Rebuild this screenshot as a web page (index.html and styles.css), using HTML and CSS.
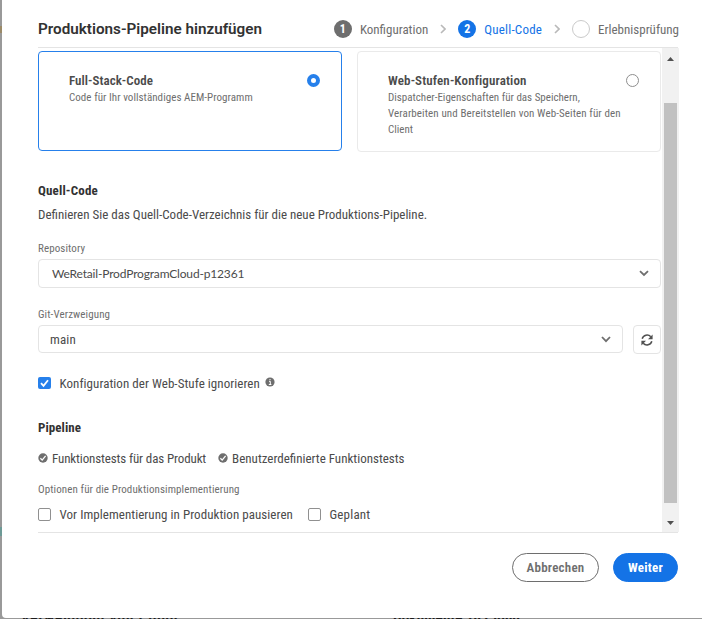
FILE: index.html
```html
<!DOCTYPE html>
<html lang="de">
<head>
<meta charset="utf-8">
<title>Produktions-Pipeline hinzufügen</title>
<link rel="stylesheet" href="styles.css">
</head>
<body>
<div class="backdrop"><i class="tan"></i><i class="teal"></i><b class="under-left">Verwendung von Cloud</b><b class="under-right">Dokumente zu Cloud</b></div>
<main class="dialog">
  <header class="header">
    <h1>Produktions-Pipeline hinzufügen</h1>
    <ol class="steps">
      <li class="step"><span class="num">1</span><span class="name">Konfiguration</span></li>
      <li class="sep"><svg width="6" height="10" viewBox="0 0 6 10"><path d="M1 1l4 4-4 4"/></svg></li>
      <li class="step active"><span class="num">2</span><span class="name">Quell-Code</span></li>
      <li class="sep"><svg width="6" height="10" viewBox="0 0 6 10"><path d="M1 1l4 4-4 4"/></svg></li>
      <li class="step todo"><span class="num"></span><span class="name">Erlebnisprüfung</span></li>
    </ol>
  </header>
  <div class="viewport">
    <div class="content">
      <div class="cards">
        <section class="card selected">
          <div class="card-text"><h3>Full-Stack-Code</h3><p>Code für Ihr vollständiges AEM-Programm</p></div>
          <span class="radio"></span>
        </section>
        <section class="card">
          <div class="card-text"><h3 class="wide">Web-Stufen-Konfiguration</h3><p>Dispatcher-Eigenschaften für das Speichern,<br><span class="second-line">Verarbeiten und Bereitstellen von Web-Seiten für den</span><br>Client</p></div>
          <span class="radio"></span>
        </section>
      </div>
      <h2 class="source-title">Quell-Code</h2>
      <p class="intro">Definieren Sie das Quell-Code-Verzeichnis für die neue Produktions-Pipeline.</p>
      <div class="label">Repository</div>
      <div class="select repo"><span>WeRetail-ProdProgramCloud-p12361</span><svg class="chev" width="10" height="7" viewBox="0 0 10 7"><path d="M1 1.2l4 3.8 4-3.8"/></svg></div>
      <div class="label git-label">Git-Verzweigung</div>
      <div class="branch">
        <div class="select"><span class="value">main</span><svg class="chev" width="10" height="7" viewBox="0 0 10 7"><path d="M1 1l4 4.2L9 1"/></svg></div>
        <div class="refresh"><svg width="14" height="14" viewBox="0 0 14 14"><path class="arc" d="M2.2 5.8A5 5 0 0 1 10.8 3.8M11.8 8.2A5 5 0 0 1 3.2 10.2"/><path class="tip" d="M12.6 1.6v4.6H8zM1.4 12.4V7.8H6z"/></svg></div>
      </div>
      <div class="check-row ignore">
        <span class="box checked"><svg width="13" height="12" viewBox="0 0 13 12"><path d="M3 6.2l2.5 2.6L10 3.2"/></svg></span><span>Konfiguration der Web-Stufe ignorieren</span>
        <svg class="info" width="10" height="10" viewBox="0 0 10 10"><circle cx="5" cy="5" r="4.6"/><path d="M4 4.3h1.3v3M3.8 7.5h2.6M5 2v1.2"/></svg>
      </div>
      <h2 class="pipe-title">Pipeline</h2>
      <div class="tests">
        <span class="test product"><svg width="10" height="10" viewBox="0 0 10 10"><circle cx="5" cy="5" r="4.7"/><path d="M2.4 5.2l1.8 1.9 3.4-4.2"/></svg>Funktionstests für das Produkt</span>
        <span class="test"><svg width="10" height="10" viewBox="0 0 10 10"><circle cx="5" cy="5" r="4.7"/><path d="M2.4 5.2l1.8 1.9 3.4-4.2"/></svg>Benutzerdefinierte Funktionstests</span>
      </div>
      <div class="label options-label">Optionen für die Produktionsimplementierung</div>
      <div class="check-row options"><span class="box"></span><span>Vor Implementierung in Produktion pausieren</span><span class="box second"></span><span class="planned">Geplant</span></div>
    </div>
    <div class="scrollbar">
      <svg width="7" height="4" viewBox="0 0 7 4"><path d="M0 4L3.5 0 7 4z"/></svg>
      <div class="thumb"></div>
      <svg width="7" height="4" viewBox="0 0 7 4"><path d="M0 0h7L3.5 4z"/></svg>
    </div>
  </div>
  <footer class="footer"><button class="btn cancel">Abbrechen</button><button class="btn next">Weiter</button></footer>
</main>
</body>
</html>
```

FILE: styles.css
```css
* { box-sizing: border-box; }
body {
  margin: 0;
  height: 619px;
  overflow: hidden;
  padding-left: 2px;
  background: #999;
  color: #4b4b4b;
  font: 400 13px/20px Roboto, sans-serif;
  font-stretch: 85%;
}
h1, h2, h3, p, ol { margin: 0; padding: 0; }
svg { display: block; flex: none; }
/* Page behind the dialog, visible only at its left and bottom edges */
.backdrop { position: absolute; inset: 0; overflow: hidden; height: 619px; color: #1c1c1c; }
.backdrop i, .backdrop b { position: absolute; }
.tan { left: 0; top: 26px; width: 2px; height: 7px; background: #9b8a68; }
.teal { left: 0; top: 527px; width: 2px; height: 9px; background: #6d9a96; }
.under-left, .under-right { top: 608px; font-size: 15px; letter-spacing: 1px; white-space: nowrap; }
.under-left { left: 21px; }
.under-right { left: 393px; letter-spacing: .2px; }
.dialog {
  position: relative;
  height: 618px;
  padding: 0 24px 0 36px;
  background: #fff;
  border-bottom-left-radius: 4px;
  white-space: nowrap;
}
.header {
  height: 48px;
  padding-top: 10px;
  display: flex;
  justify-content: space-between;
  align-items: center;
  border-bottom: 1px solid #e4e4e4;
}
h1 { font-size: 15.25px; font-weight: 600; font-stretch: 100%; line-height: 20px; color: #323232; }
.steps { display: flex; align-items: center; list-style: none; color: #6e6e6e; margin-right: -1px; }
.step { display: flex; align-items: center; gap: 8px; }
.name { padding-top: 2px; }
.num {
  width: 18px; height: 18px;
  border-radius: 50%;
  background: #6e6e6e;
  color: #fff;
  font-size: 12px; font-weight: 700; line-height: 18px;
  text-align: center;
}
.active { color: #1473e6; letter-spacing: .2px; }
.active .num { background: #1473e6; }
.todo .num { background: none; border: 1px solid #cacaca; }
.sep { width: 30px; padding-left: 12px; }
.sep svg { fill: none; stroke: #b9b9b9; stroke-width: 1.6; }
.viewport { display: flex; height: 485px; border-bottom: 1px solid #e4e4e4; }
.content { width: 623px; }
.cards { display: flex; gap: 15px; padding-top: 3px; }
.card {
  display: flex;
  justify-content: space-between;
  width: 304px; height: 101px;
  padding: 20px 21px 0 30px;
  border: 1px solid #eaeaea;
  border-radius: 4px;
}
.card.selected { height: 100px; border-color: #2680eb; }
.card h3 { font-size: 13px; font-weight: 600; line-height: 18px; letter-spacing: .05px; }
.card h3.wide { letter-spacing: .14px; }
.card p { font-size: 11px; line-height: 16px; color: #6e6e6e; }
.card.selected p { letter-spacing: .05px; }
.second-line { letter-spacing: .1px; }
.card-text { width: 234px; }
.radio { flex: none; width: 13px; height: 13px; margin-top: 2px; border: 1px solid #8e8e8e; border-radius: 50%; }
.selected .radio { border: 4px solid #2680eb; }
h2 { font-size: 13px; font-weight: 700; line-height: 20px; color: #323232; letter-spacing: .17px; }
.source-title { margin-top: 29px; }
.intro { margin-top: 4px; }
.label { font-size: 11px; line-height: 16px; color: #6e6e6e; letter-spacing: .1px; margin-top: 16px; }
.select {
  display: flex;
  align-items: center;
  justify-content: space-between;
  height: 28px;
  padding: 0 11px;
  border: 1px solid #e4e4e4;
  border-radius: 4px;
}
.value { padding-top: 2px; }
.repo { height: 29px; margin-top: 2px; padding: 0 11px 0 13px; font: 12px/20px Lato, sans-serif; letter-spacing: -.17px; }
.chev { fill: none; stroke: #6e6e6e; stroke-width: 1.8; }
.git-label { margin-top: 19px; }
.branch { display: flex; gap: 10px; margin-top: 2px; height: 29px; letter-spacing: .17px; }
.branch .select { width: 585px; }
.refresh { width: 28px; height: 29px; padding: 7px 6px; border: 1px solid #e4e4e4; border-radius: 4px; }
.arc { fill: none; stroke: #505050; stroke-width: 1.5; }
.tip { fill: #505050; }
.check-row { display: flex; align-items: center; letter-spacing: .05px; }
.box { flex: none; width: 13px; height: 13px; margin: 0 8.5px 2px 0; border: 1px solid #909090; border-radius: 2px; }
.box.checked { height: 12px; border: 0; background: #2680eb; }
.checked svg { fill: none; stroke: #fff; stroke-width: 1.8; }
.ignore { margin-top: 20px; }
.info { margin: -4px 0 0 5px; }
.info circle, .test circle { fill: #6e6e6e; }
.info path { fill: none; stroke: #fff; stroke-width: 1; }
.pipe-title { margin-top: 24px; letter-spacing: .06px; }
.tests { display: flex; gap: 12px; margin-top: 11px; }
.test { display: flex; align-items: center; gap: 4px; }
.product { letter-spacing: -.12px; }
.test svg { margin-top: -3px; }
.test path { fill: none; stroke: #fff; stroke-width: 1.3; }
.options-label { margin-top: 13px; }
.options { margin-top: 7px; }
.box.second { margin-left: 15px; }
.planned { letter-spacing: .2px; }
.scrollbar {
  width: 17px;
  padding: 9px 2px 7px;
  background: #f1f1f1;
  display: flex;
  flex-direction: column;
  align-items: center;
  justify-content: space-between;
  margin-left: 1px;
}
.scrollbar svg { fill: #505050; }
.thumb { width: 13px; height: 400px; margin-top: 24px; background: #c1c1c1; }
.footer { display: flex; justify-content: flex-end; gap: 14px; padding-top: 20px; }
.btn {
  height: 29px;
  padding: 0;
  border: 1px solid #6e6e6e;
  border-radius: 15px;
  background: #fff;
  color: #6e6e6e;
  font: 600 13px/20px Roboto, sans-serif;
  font-stretch: 85%;
  letter-spacing: .24px;
}
.cancel { width: 87px; }
.next { width: 65px; border-color: #1473e6; background: #1473e6; color: #fff; font-weight: 700; }
```
